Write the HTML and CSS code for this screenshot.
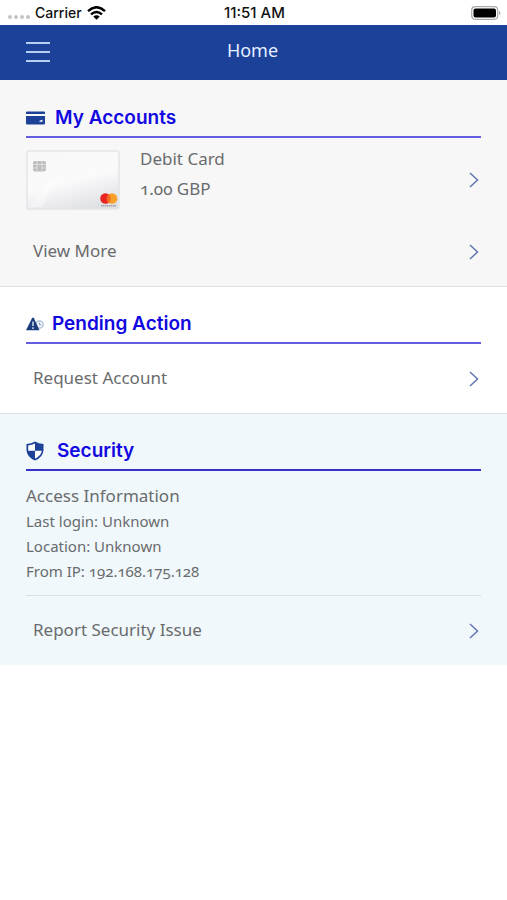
FILE: index.html
```html
<!DOCTYPE html>
<html lang="en">
<head>
<meta charset="utf-8">
<meta name="viewport" content="width=device-width, initial-scale=1">
<title>Home</title>
<link rel="stylesheet" href="styles.css">
</head>
<body>
<div class="status">
  <div class="carrier">
    <span class="dots"><i></i><i></i><i></i><i></i></span>
    <span>Carrier</span>
    <svg width="19" height="14" viewBox="0 0 19 14" aria-hidden="true"><g fill="none" stroke="#000" stroke-width="2.4"><path d="M1 5.1Q9.500-2.700 18 5.100"/><path d="M4 8.400Q9.500 3.400 15 8.400"/></g><path d="M6.300 10.600Q9.500 8 12.700 10.600L9.500 13.800Z"/></svg>
  </div>
  <span class="time">11:51 AM</span>
  <svg class="battery" width="30" height="14" viewBox="0 0 30 14" aria-hidden="true"><rect x=".7" y=".7" width="26" height="12.600" rx="3.500" fill="#fff" stroke="#aaa" stroke-width="1.200"/><rect x="2.500" y="2.500" width="22.500" height="9" rx="2"/><path d="M28 5v4q1.500-.5 1.500-2T28 5" fill="#aaa"/></svg>
</div>
<header class="bar">
  <button class="menu" aria-label="Menu"><svg width="26" height="22" viewBox="0 0 26 22" aria-hidden="true"><path d="M2 2H26M2 11H26M2 20H26" stroke="#b5cff3" stroke-width="2"/></svg></button>
  <h1>Home</h1>
</header>
<main>
  <section class="accounts">
    <h2><svg width="19" height="14" viewBox="0 0 19 14" aria-hidden="true"><path fill="#1c4196" d="M1 .5H18Q19 .5 19 1.500V3H0V1.500Q0 .5 1 .5ZM0 5H19V12.500Q19 13.500 18 13.500H1Q0 13.500 0 12.500Z"/><path fill="#fff" d="M13.500 9.800L16.500 8.800V10.800H13.500Z"/></svg><span>My Accounts</span></h2>
    <a class="card-row" href="#card">
      <svg class="card" width="94" height="60" viewBox="0 0 94 60" aria-hidden="true">
        <defs><linearGradient id="silver" x1=".3" y1="0" x2=".7" y2="1"><stop offset="0" stop-color="#f8f8f9"/><stop offset=".5" stop-color="#fafafb"/><stop offset="1" stop-color="#dfe0e4"/></linearGradient></defs>
        <rect x="1" y="1" width="92" height="58" rx="2" fill="url(#silver)" stroke="#e4e5e6" stroke-width="1.500"/>
        <path d="M3 57L22 32L31 29L16 57Z" fill="#fff" opacity=".35"/>
        <rect x="7" y="11" width="13" height="10.500" rx="2" fill="#bdbdbd"/><path d="M7 14.500H11V18H7M20 14.500H16V18H20M11 11V14.500M16 18V21.500M11 18V21.500M16 11V14.500H11" fill="none" stroke="#e4e4e4" stroke-width=".8"/>
        <circle cx="79.500" cy="48.500" r="5.300" fill="#e92523"/><circle cx="86" cy="48.500" r="5.300" fill="#f9a02a"/><path d="M82.750 44.300A5.300 5.300 0 0 1 82.750 52.700A5.300 5.300 0 0 1 82.750 44.300" fill="#f26922"/>
        <path d="M75 55.800H90" stroke="#a5a5a8" stroke-width="1.400" stroke-dasharray="1.500 .5"/>
      </svg>
      <span class="details"><span>Debit Card</span><span>1.00 GBP</span></span>
      <svg class="chevron" width="10" height="16" viewBox="0 0 10 16" aria-hidden="true"><path d="M1 1L8.500 8L1 15"/></svg>
    </a>
    <a class="row" href="#more"><span>View More</span><svg class="chevron" width="10" height="16" viewBox="0 0 10 16" aria-hidden="true"><path d="M1 1L8.500 8L1 15"/></svg></a>
  </section>
  <section class="pending">
    <h2><svg width="18" height="14" viewBox="0 0 18 14" aria-hidden="true"><circle cx="13.500" cy="7.500" r="3.700" fill="#edf3fa" stroke="#a9bad5" stroke-width="1.200"/><path d="M13.500 5.500V7.700H15.300" fill="none" stroke="#7189b5" stroke-width=".8"/><path fill="#1b3c7c" d="M7 .5Q7.600 .5 8 1.300L13.500 13.300H0L6 1.300Q6.400 .5 7 .5Z"/><path d="M7 4.500V9M7 10.300V12" stroke="#dfe8f5" stroke-width="1.400"/></svg><span>Pending Action</span></h2>
    <a class="row" href="#request"><span>Request Account</span><svg class="chevron" width="10" height="16" viewBox="0 0 10 16" aria-hidden="true"><path d="M1 1L8.500 8L1 15"/></svg></a>
  </section>
  <section class="security">
    <h2><svg width="18" height="20" viewBox="0 0 18 20" aria-hidden="true"><path fill="#1c4196" d="M9 .5Q12.500 2.800 17.500 3V9Q17.300 16 9 19.500Q.7 16 .5 9V3Q5.500 2.800 9 .5Z"/><path fill="#fff" d="M9 2.600V9.800H2.200V4.500Q6 4.200 9 2.600ZM9 9.800H15.800Q15.300 14.800 9 17.700Z"/></svg><span>Security</span></h2>
    <div class="access"><h3>Access Information</h3><p>Last login: Unknown</p><p>Location: Unknown</p><p>From IP: 192.168.175.128</p></div>
    <a class="row" href="#report"><span>Report Security Issue</span><svg class="chevron" width="10" height="16" viewBox="0 0 10 16" aria-hidden="true"><path d="M1 1L8.500 8L1 15"/></svg></a>
  </section>
</main>
</body>
</html>
```
FILE: styles.css
```css
* { box-sizing: border-box; }
body {
  margin: 0;
  background: #fff;
  color: #696b6d;
  font: 17px/24px "Noto Sans", sans-serif;
  font-feature-settings: "onum";
}
h1, h2, h3, p { margin: 0; font-weight: 400; }
a { color: inherit; text-decoration: none; }
svg { display: block; flex: none; }
.status {
  display: grid;
  grid-template-columns: 1fr auto 1fr;
  align-items: center;
  height: 25px;
  padding: 0 6px 0 8px;
  color: #111;
  font: 500 14px/24px Inter, sans-serif;
}
.time { font-size: 15px; }
.carrier { display: flex; align-items: center; gap: 5px; }
.dots { display: flex; gap: 2px; padding-top: 8px; }
.dots i { width: 4px; height: 4px; border-radius: 50%; background: #c4c4c4; }
.battery { justify-self: end; }
.bar {
  display: grid;
  grid-template-columns: 1fr auto 1fr;
  align-items: center;
  height: 55px;
  padding: 0 26px 2px 24px;
  background: #1c4199;
  color: #e4efff;
}
.bar h1 { padding-bottom: 4px; font-size: 18px; }
.menu { justify-self: start; padding: 0; border: 0; background: none; cursor: pointer; }
section { padding: 0 26px; border-bottom: 1px solid #dfe0e2; }
.accounts { padding-top: 1px; background: #f7f7f7; }
.pending { background: #fff; }
.security { background: #f0f8fb; border: 0; }
h2 {
  display: flex;
  align-items: center;
  height: 57px;
  padding-top: 18px;
  border-bottom: 2px solid #625edf;
  color: #1208e0;
  font: 600 19px/24px Inter, sans-serif;
}
.accounts h2 { gap: 10px; }
.pending h2 { gap: 8px; }
.security h2 { gap: 13px; border-color: #3531cf; }
.card-row { display: flex; align-items: center; height: 79px; padding: 5px 2px 0 0; }
.card-row .details { display: grid; gap: 6px; flex: 1; padding: 0 0 12px 20px; }
.row { display: flex; align-items: center; justify-content: space-between; height: 69px; padding: 0 2px 0 7px; }
.row span { padding-bottom: 2px; }
.chevron { fill: none; stroke: #6475b1; stroke-width: 1.5; }
.access { padding: 12px 0 11px; border-bottom: 1px solid #d9dfe3; }
.access h3 { font-size: 17px; line-height: 26px; }
.access p { font-size: 15px; line-height: 25px; }
```
